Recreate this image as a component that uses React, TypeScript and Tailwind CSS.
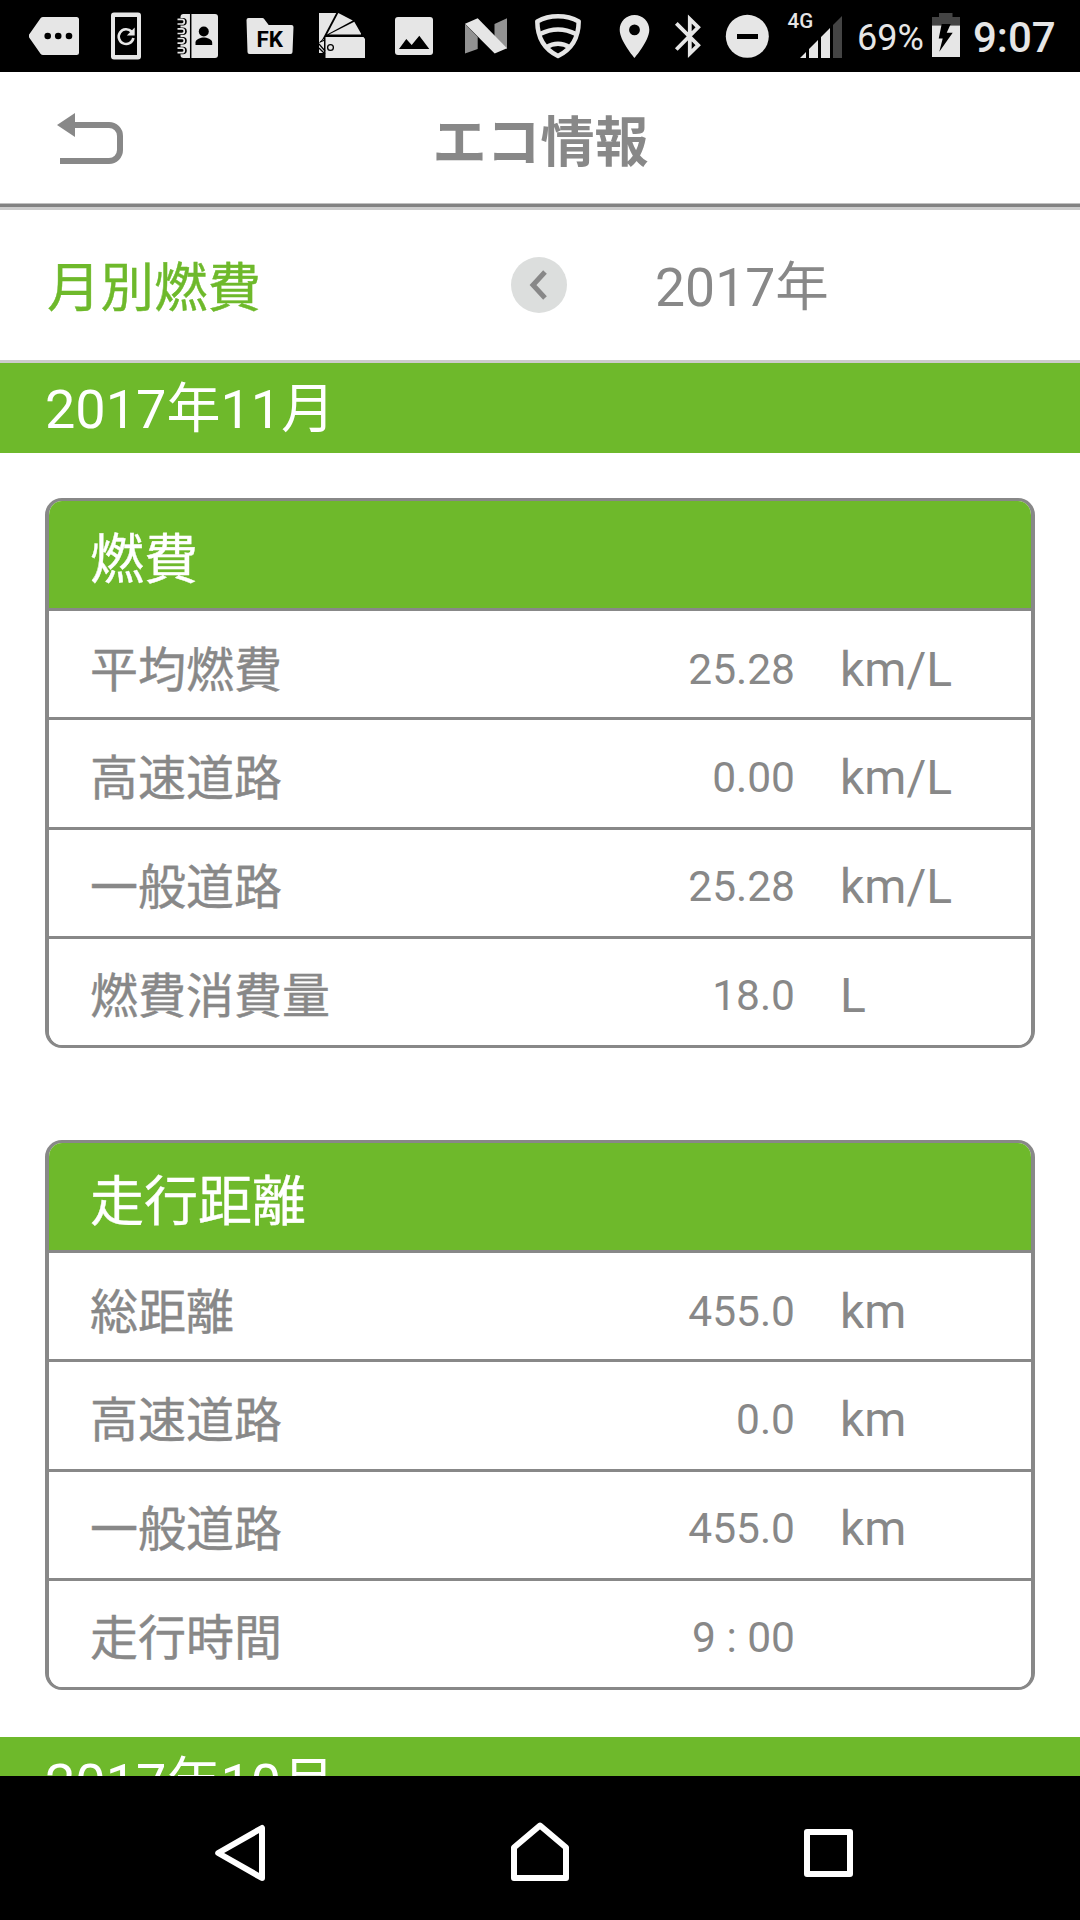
import type { ReactNode } from "react"
import clsx from "clsx"

interface Entry {
  label: string
  value: string
  unit?: string
}

const fuelRows: Entry[] = [
  { label: "平均燃費", value: "25.28", unit: "km/L" },
  { label: "高速道路", value: "0.00", unit: "km/L" },
  { label: "一般道路", value: "25.28", unit: "km/L" },
  { label: "燃費消費量", value: "18.0", unit: "L" },
]

const distanceRows: Entry[] = [
  { label: "総距離", value: "455.0", unit: "km" },
  { label: "高速道路", value: "0.0", unit: "km" },
  { label: "一般道路", value: "455.0", unit: "km" },
  { label: "走行時間", value: "9 : 00" },
]

// 行ごとの文字位置の微調整
const rowPadding = ["pt-[11px]", "pt-[9px]", "pt-[8px]", "pt-[7px]"]

// x / w はステータスバー上の位置と幅
function StatusIcon({ x, w, className, children }: { x: number; w: number; className?: string; children: ReactNode }) {
  return (
    <svg viewBox={`${x} 0 ${w} 72`} width={w} height={72} fill="#e6e6e6" className={clsx("shrink-0", className)}>
      {children}
    </svg>
  )
}

function StatusBar() {
  return (
    <div className="flex h-[72px] shrink-0 items-center bg-black text-[#e6e6e6]">
      {/* メッセージ */}
      <StatusIcon x={29} w={50} className="ml-[29px]">
        <path d="M43 17H76.500a2.500 2.500 0 0 1 2.500 2.500V52.500a2.500 2.500 0 0 1-2.500 2.500H43a3 3 0 0 1-2.300-1.100L29.500 38a3 3 0 0 1 0-4L40.700 18.100A3 3 0 0 1 43 17z" />
        <g fill="#000">
          <circle cx="47.700" cy="36" r="3.300" />
          <circle cx="58.200" cy="36" r="3.300" />
          <circle cx="69" cy="36" r="3.300" />
        </g>
      </StatusIcon>
      {/* 端末の更新 */}
      <StatusIcon x={111} w={30} className="ml-[32px]">
        <rect x="111" y="12.500" width="30" height="47" rx="3" />
        <rect x="115" y="17" width="22" height="38" fill="#000" />
        <path d="M131.500 31.500A7.400 7.400 0 1 0 133.400 38" fill="none" stroke="#e6e6e6" strokeWidth="2.600" />
        <path d="M134.700 27.500V35.500H126.800z" />
      </StatusIcon>
      {/* 連絡先 */}
      <StatusIcon x={176} w={42} className="ml-[35px]">
        <path d="M183.500 14H215a3 3 0 0 1 3 3V55a3 3 0 0 1-3 3H183.500a3 3 0 0 1-3-3V17a3 3 0 0 1 3-3z" />
        <path d="M190.700 14V58" stroke="#000" strokeWidth="1.500" />
        {[21.7, 31.2, 40.8, 50.4].map((y) => (
          <g key={y} fill="none">
            <path d={`M176 ${y}H183`} stroke="#000" strokeWidth="7.500" strokeLinecap="round" />
            <path d={`M177.500 ${y - 2.3}H182a2.300 2.300 0 0 1 0 4.600H177.500`} stroke="#e6e6e6" strokeWidth="1.700" />
          </g>
        ))}
        <circle cx="203.800" cy="31.500" r="5" fill="#000" />
        <path d="M195.500 45V42.500c0-3.500 5.500-5 8.300-5s8.400 1.500 8.400 5V45z" fill="#000" />
      </StatusIcon>
      {/* ファイル管理 */}
      <StatusIcon x={246} w={48} className="ml-[28px]">
        <path d="M248.500 18H262.500a2 2 0 0 1 1.500.700L268.700 25H291.500a2 2 0 0 1 2 2L292.500 52a2 2 0 0 1-2 2H249.500a2 2 0 0 1-2-2L246.500 20a2 2 0 0 1 2-2z" />
        <text x="256.500" y="47.300" fill="#000" fontSize="22" fontWeight="700" textLength="26.500" lengthAdjust="spacingAndGlyphs">
          FK
        </text>
      </StatusIcon>
      {/* カラーサンプル */}
      <StatusIcon x={319} w={46} className="ml-[25px]">
        <path d="M319 13H336.200L322.500 39 319 43z" />
        <path d="M338.300 13L352.800 20.500 327 34.500z" />
        <path d="M354.300 21.700L361 33.500V34.500H329z" />
        <path d="M325.500 37H363.500L365 39V58H325.500z" />
        <path d="M319 43.500L324 39V53H319z" />
        <path d="M319 44L325 51M319 48L325 54M320 42L325 40" stroke="#000" strokeWidth="1.300" />
        <circle cx="330.500" cy="47.500" r="2.900" fill="none" stroke="#000" strokeWidth="1.300" />
      </StatusIcon>
      {/* 画像 */}
      <StatusIcon x={395} w={38} className="ml-[30px]">
        <rect x="395" y="17" width="38" height="38" rx="3" />
        <path d="M399 49L406.300 39 411.700 45 419.300 35.700 429.300 49z" fill="#000" />
      </StatusIcon>
      <StatusIcon x={465} w={42} className="ml-[32px]">
        <path d="M465 24L477.700 37V49L465 53.500zM494.500 24L507 18.300V49L494.500 37z" fill="#929292" />
        <path d="M465 23.700L477.700 18.300 507 48.300 494.700 53.500z" />
      </StatusIcon>
      {/* セキュアWi-Fi */}
      <StatusIcon x={535} w={46} className="ml-[28px]">
        <g fill="none" stroke="#e6e6e6" strokeWidth="4.500" strokeLinejoin="round">
          <path d="M558 16.300Q569.500 16.300 578.700 21.500Q578.500 46 558 56Q537.500 46 537.300 21.500Q546.500 16.300 558 16.300z" />
          <path d="M540 34Q558 25 576 34" />
          <path d="M546 47.500Q558 40 570 47.500" />
        </g>
      </StatusIcon>
      {/* 位置情報 */}
      <StatusIcon x={619} w={31} className="ml-[38px]">
        <path
          fillRule="evenodd"
          d="M634.500 15c-8.200 0-14.800 6.600-14.800 14.800 0 11.200 14.800 28.200 14.800 28.200s14.800-17 14.800-28.200c0-8.200-6.600-14.800-14.800-14.800zm0 20.300a5.400 5.400 0 1 1 0-10.800 5.400 5.400 0 0 1 0 10.800z"
        />
      </StatusIcon>
      {/* Bluetooth */}
      <StatusIcon x={674} w={28} className="ml-[24px]">
        <path
          d="M676.300 23.300L698.200 45.200 689.800 53.500V19L698.200 27.300 676.300 49.500"
          fill="none"
          stroke="#e6e6e6"
          strokeWidth="3.800"
        />
      </StatusIcon>
      {/* サイレント */}
      <StatusIcon x={725} w={44} className="ml-[23px]">
        <circle cx="747.300" cy="36.300" r="21.500" />
        <rect x="737" y="34" width="21" height="5" fill="#000" />
      </StatusIcon>
      {/* 電波 */}
      <StatusIcon x={786} w={57} className="ml-[17px]">
        <text x="787.500" y="27.700" fontSize="20.500" fontWeight="500">
          4G
        </text>
        <path d="M800 58L806 52V58zM809 49L818 40V58H809zM821 37L830 28V58H821z" />
        <path d="M833 25L842 16V58H833z" fill="#444" />
      </StatusIcon>
      <span className="ml-[14px] w-[75px] pt-[4px] text-[36px] leading-[72px]">69%</span>
      {/* バッテリー */}
      <StatusIcon x={932} w={28}>
        <path d="M932 25.500V17H939V13H952.500V17H960V25.500z" fill="#444" />
        <path d="M932 25.500H960V57H932z" />
        <path d="M941.700 24H950.700L946.700 32.700H952.700L939.300 51.700 942.700 38.500H938.700z" fill="#000" />
      </StatusIcon>
      <span className="ml-[13px] pt-[4px] text-[42px] font-medium leading-[72px]">9:07</span>
    </div>
  )
}

function TitleBar() {
  return (
    <div className="shrink-0">
      <div className="grid h-[131px] grid-cols-3 items-center">
        <svg viewBox="57 110 68 54" className="ml-[57px] h-[54px] w-[68px]">
          <path d="M57 124L75 112V136z" fill="#888" />
          <path d="M74 124H109a11 11 0 0 1 11 11V149a11 11 0 0 1-11 11H60" fill="none" stroke="#888" strokeWidth="6" />
        </svg>
        <h1 className="pt-[12px] pl-px text-center text-[54px] font-bold leading-[80px] text-[#888]">エコ情報</h1>
      </div>
      <div className="h-px bg-[#c0c0c0]" />
      <div className="h-[3px] bg-[#828282]" />
      <div className="h-[3px] bg-[#ccc]" />
    </div>
  )
}

function YearBar() {
  return (
    <div className="flex h-[153px] shrink-0 items-center border-b-3 border-[#ccc]">
      <h2 className="w-[466px] pt-[7px] pl-[47px] text-[53.500px] leading-[80px] text-[#6eb92b] [-webkit-text-stroke:0.4px]">
        月別燃費
      </h2>
      <button type="button" className="ml-[45px] flex h-14 w-14 items-center justify-center rounded-full bg-[#dcdedd]">
        <svg viewBox="0 0 20 32" className="mr-[2px] h-8 w-5">
          <path d="M17 3L5 16 17 29" fill="none" stroke="#888" strokeWidth="5" />
        </svg>
      </button>
      <span className="ml-[88px] pt-[5px] text-[53.500px] leading-[80px] text-[#888]">2017年</span>
    </div>
  )
}

function MonthBar({ month }: { month: string }) {
  return <div className="h-[90px] shrink-0 bg-[#6eb92b] pl-[45px] text-[54px] leading-[94px] text-white">{month}</div>
}

function Card({ title, rows }: { title: string; rows: Entry[] }) {
  return (
    <section className="mx-[45px] h-[550px] shrink-0 overflow-hidden rounded-[17px] border-x-4 border-y-3 border-[#888]">
      <h3 className="h-[107px] bg-[#6eb92b] pl-[41px] text-[54px] leading-[120px] text-white [-webkit-text-stroke:0.4px]">
        {title}
      </h3>
      {rows.map((row, i) => (
        <div
          key={row.label}
          className={clsx(
            "flex h-[109.330px] items-center border-t-3 border-[#888] bg-white text-[48px] leading-[72px] text-[#888]",
            rowPadding[i],
          )}
        >
          <span className="w-[400px] pt-[2px] pl-[41px] [-webkit-text-stroke:0.4px]">{row.label}</span>
          <span className="w-[346px] text-right text-[42.500px] whitespace-pre">{row.value}</span>
          <span className="ml-[45px] pt-px">{row.unit}</span>
        </div>
      ))}
    </section>
  )
}

function NavBar() {
  return (
    <nav className="flex h-36 shrink-0 items-center bg-black pt-2">
      <svg viewBox="210 1820 60 64" className="ml-[210px] h-16 w-[60px]">
        <path d="M218.200 1853L262 1828V1878z" fill="none" stroke="#fff" strokeWidth="6" strokeLinejoin="round" />
      </svg>
      <svg viewBox="510 1820 60 64" className="ml-[240px] h-16 w-[60px]">
        <path d="M540 1825.500L566 1847.500V1878H514V1847.500z" fill="none" stroke="#fff" strokeWidth="6" strokeLinejoin="round" />
      </svg>
      <svg viewBox="800 1820 60 64" className="ml-[230px] h-16 w-[60px]">
        <path d="M807 1832H850V1874H807z" fill="none" stroke="#fff" strokeWidth="6" strokeLinejoin="round" />
      </svg>
    </nav>
  )
}

export default function App() {
  return (
    <div className="flex h-[1920px] w-[1080px] flex-col overflow-hidden bg-white font-['Roboto','Noto_Sans_CJK_JP',sans-serif]">
      <StatusBar />
      <TitleBar />
      <YearBar />
      <main className="flex min-h-0 flex-1 flex-col overflow-hidden">
        <MonthBar month="2017年11月" />
        <div className="flex shrink-0 flex-col gap-[92px] pt-[45px] pb-[47px]">
          <Card title="燃費" rows={fuelRows} />
          <Card title="走行距離" rows={distanceRows} />
        </div>
        <MonthBar month="2017年10月" />
      </main>
      <NavBar />
    </div>
  )
}
